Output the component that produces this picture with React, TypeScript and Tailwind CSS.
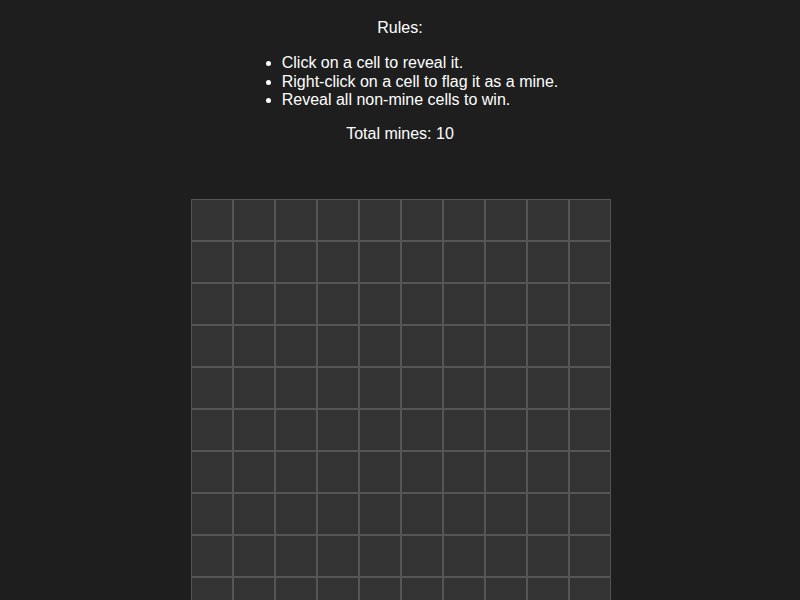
const ROWS = 10;
const COLS = 10;

function Cell() {
  return <div className="w-[42px] h-[42px] bg-[#333333] border border-[#555555]" />;
}

export default function App() {
  const cells = Array.from({ length: ROWS * COLS }, (_, i) => i);

  return (
    <div className="min-h-screen bg-[#1e1e1e] text-white font-['Liberation_Sans',Arial,sans-serif] text-base leading-[1.15] pt-[19px]">
      <div className="flex flex-col items-center">
        <p className="text-center">Rules:</p>
        <ul className="mt-[17px] list-disc pl-10 text-left">
          <li>Click on a cell to reveal it.</li>
          <li>Right-click on a cell to flag it as a mine.</li>
          <li>Reveal all non-mine cells to win.</li>
        </ul>
        <p className="mt-[15px] text-center">Total mines: 10</p>
      </div>

      <div className="mt-[56px] flex justify-center pl-[2px]">
        <div className="grid grid-cols-[repeat(10,42px)]">
          {cells.map((i) => (
            <Cell key={i} />
          ))}
        </div>
      </div>
    </div>
  );
}
